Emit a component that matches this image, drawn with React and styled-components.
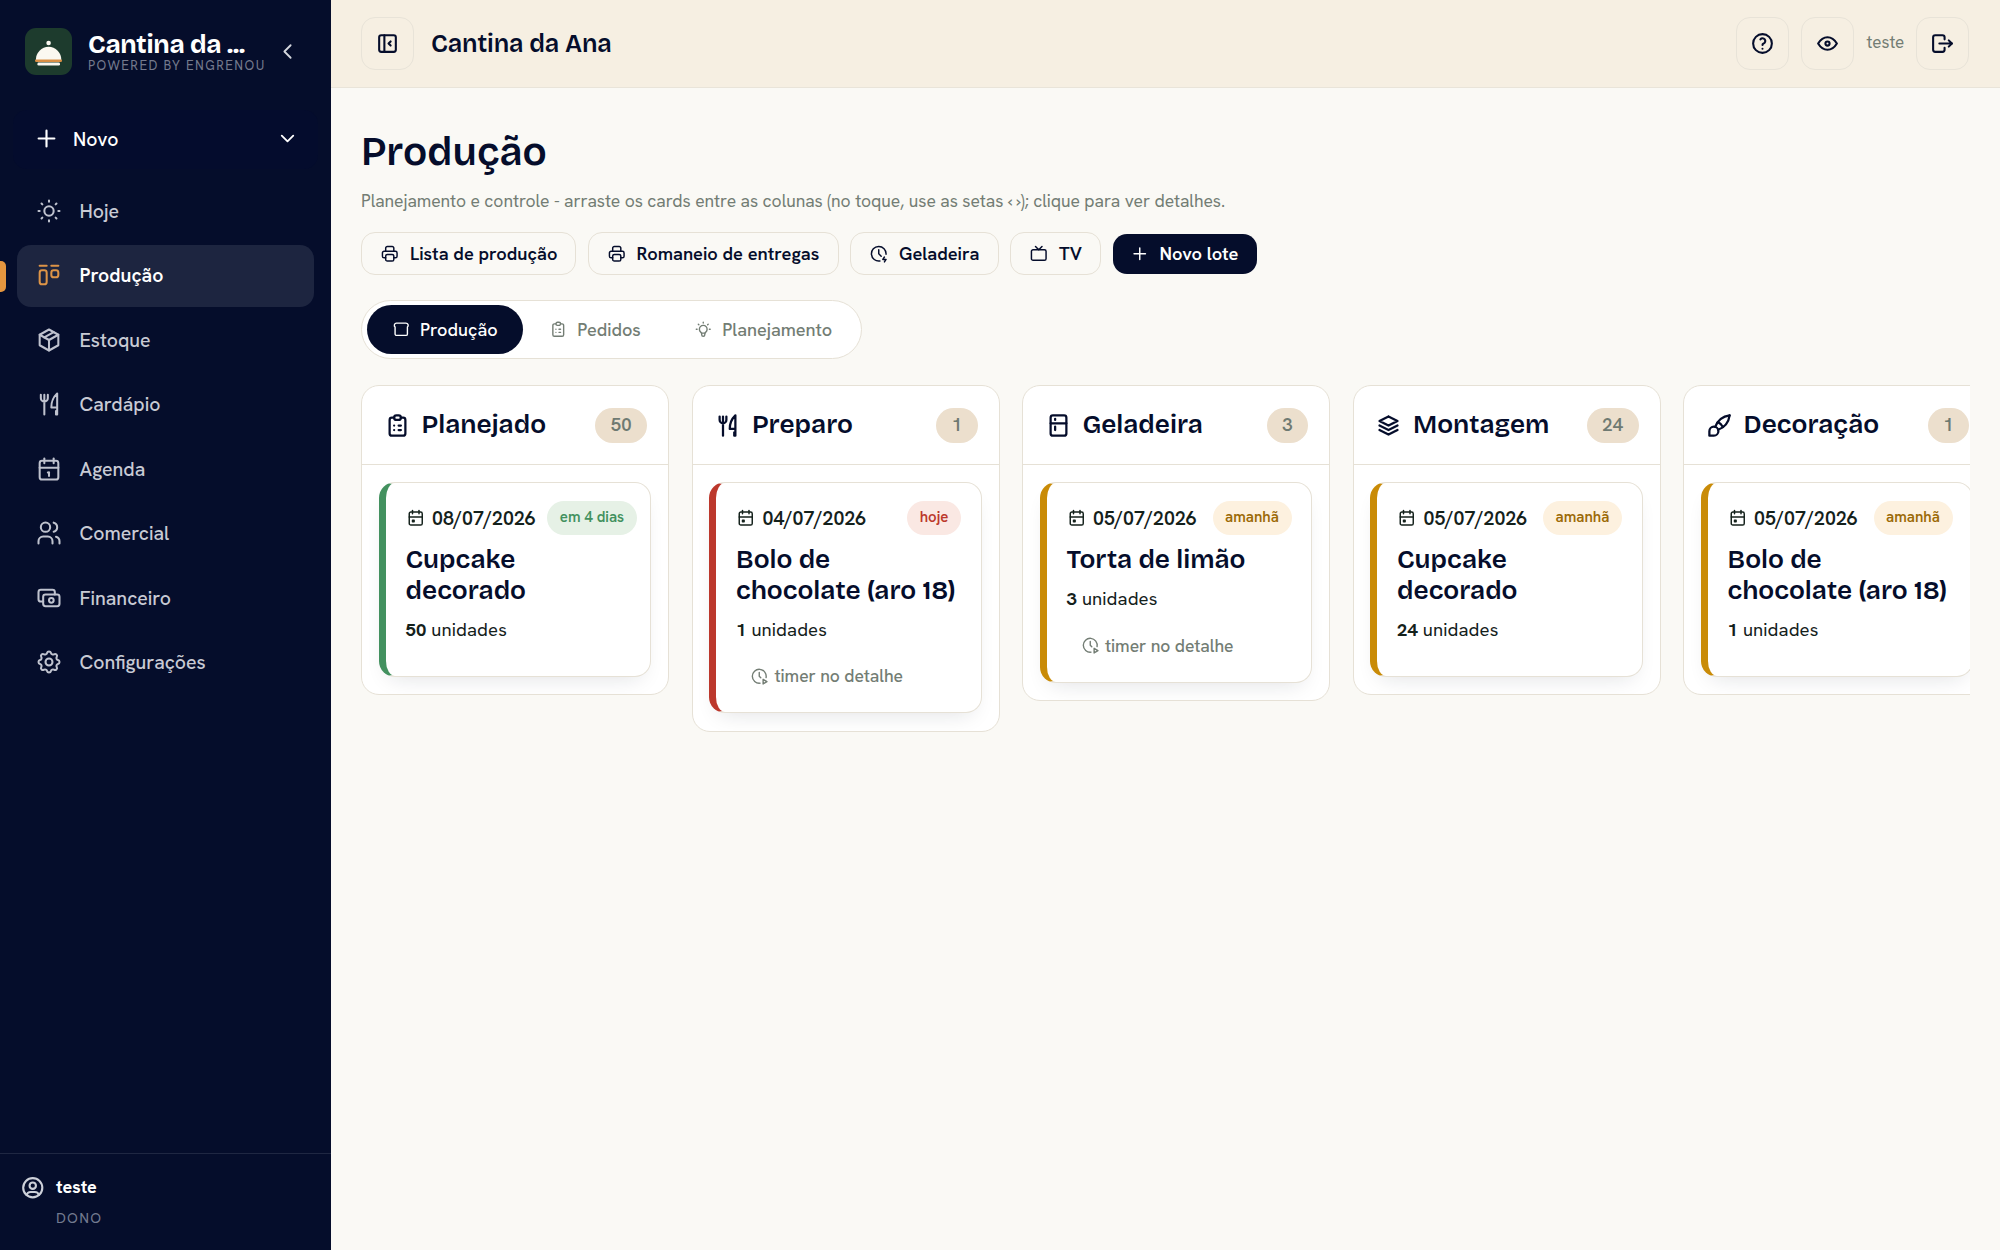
import React from 'react';
import styled, { createGlobalStyle, css } from 'styled-components';
import {
  TbSun, TbLayoutKanban, TbPackage, TbToolsKitchen2, TbCalendar, TbUsers, TbCash, TbSettings,
  TbUserCircle, TbLayoutSidebarLeftCollapse, TbHelp, TbEye, TbLogout, TbPrinter, TbClockBolt,
  TbClockPlay, TbDeviceTv, TbPlus, TbChevronLeft, TbChevronDown, TbBread, TbClipboardList,
  TbBulb, TbFridge, TbStack2, TbBrush, TbCalendarEvent,
} from 'react-icons/tb';

const navy = '#050d2b';
const line = '#e6e1d6';
const muted = '#737d74';
const body = "'Hanken Grotesk', Lato, 'Open Sans', sans-serif";
const display = "'Bricolage Grotesque', Inter, 'Liberation Sans', sans-serif";

const Global = createGlobalStyle`
  * { box-sizing: border-box; }
  body { margin: 0; background: #faf9f5; font-family: ${body}; color: #14211b; overflow: hidden; }
  h1, h2, h3, p { margin: 0; }
  button { font-family: inherit; margin: 0; }
  svg { flex: none; display: block; }
`;

const icon = (size, stroke = 2) => css`
  > svg { width: ${size}px; height: ${size}px; stroke-width: ${stroke}; }
`;

const Shell = styled.div`display: flex; width: 2000px; height: 1250px;`;

const Sidebar = styled.aside`
  width: 330.5px; flex: none; background: ${navy}; display: flex; flex-direction: column; overflow: hidden;
`;
const Brand = styled.div`display: flex; align-items: center; height: 103px; padding: 0 31px 0 25px;`;
const Logo = styled.svg`width: 47px; height: 47px;`;
const BrandText = styled.div`margin-left: 16px; width: 180px;`;
const BrandName = styled.div`
  font: 700 26px/29px ${display}; letter-spacing: -0.3px; color: #fff; white-space: nowrap;
`;
const Powered = styled.div`
  font-size: 13px; line-height: 14px; letter-spacing: 1.4px; color: #747a8d; white-space: nowrap;
`;
const Collapse = styled.button`
  margin-left: auto; padding: 0; border: 0; background: none; color: #d5d7de; ${icon(25, 1.75)}
`;
const NewButton = styled.button`
  margin: 7px 13px 0; height: 59px; padding: 0 19px 1.5px 20px; border: 0; border-radius: 14px; background: #040c2d;
  color: #fff; display: flex; align-items: center; font-size: 19.5px; font-weight: 500;
  ${icon(27, 1.9)}
  > span { margin-left: 13px; flex: 1; text-align: left; }
  > svg:last-child { width: 23px; height: 23px; }
`;
const Nav = styled.nav`margin-top: 11px; padding: 0 16.5px 0 17px; display: flex; flex-direction: column; gap: 2.5px;`;
const NavItem = styled.a`
  position: relative; height: 62px; border-radius: 14px; padding: 0 0 0.5px 17.5px; gap: 17px; display: flex; align-items: center;
  font-size: 19.5px;
  font-weight: ${p => (p.$active ? 600 : 500)};
  color: ${p => (p.$active ? '#fff' : '#c8cad4')};
  background: ${p => (p.$active ? '#1d2540' : 'transparent')};
  ${icon(28, 1.75)}
  > svg { color: ${p => (p.$active ? '#dd9447' : '#bfc2ce')}; }
  ${p => p.$active && css`
    &::before { content: ''; position: absolute; left: -17px; top: 16px; width: 6px; height: 31px; background: #e5963f; border-radius: 0 5px 5px 0; }
  `}
`;
const Account = styled.div`
  margin-top: auto; height: 97px; border-top: 1px solid #1f2742; padding: 21px 0 0 19.5px; display: flex; gap: 11px;
  color: #cdd0d9; ${icon(25.5, 2)}
`;
const AccountName = styled.div`color: #fff; font-weight: 700; font-size: 18px; line-height: 23px;`;
const Role = styled.div`color: #737a8f; font-size: 14.5px; line-height: 18px; letter-spacing: 1.2px; margin-top: 11px;`;

const Main = styled.div`flex: 1; min-width: 0; display: flex; flex-direction: column;`;
const Header = styled.header`
  height: 88px; flex: none; background: #f6efe2; border-bottom: 1.5px solid #e9e4d9; padding: 0 31px 1px 30.5px;
  display: flex; align-items: center;
`;
const IconButton = styled.button`
  width: 53px; height: 53px; border: 1.25px solid #e8e3d8; border-radius: 14px; background: transparent; color: ${navy};
  display: grid; place-items: center; padding: 0; ${icon(25, 2)}
`;
const HeaderTitle = styled.div`
  margin-left: 17px; padding-top: 1px; font: 600 25px/30px ${display}; letter-spacing: -0.1px; color: ${navy};
`;
const HeaderTools = styled.div`margin-left: auto; display: flex; align-items: center; gap: 12.5px;`;
const HeaderUser = styled.span`font-size: 17px; color: ${muted}; width: 37px; padding-bottom: 3px;`;

const Content = styled.main`padding: 42px 30.5px 0;`;
const PageTitle = styled.h1`font: 600 40px/44px ${display}; color: ${navy};`;
const Lead = styled.p`
  margin-top: 15px; font-size: 17.5px; line-height: 24px; letter-spacing: -0.06px; color: ${muted}; white-space: nowrap;
`;
const Actions = styled.div`margin-top: 19px; display: flex; align-items: center; gap: 11.5px; height: 43px;`;
const Action = styled.button`
  width: ${p => p.$w}px; height: ${p => (p.$primary ? 40 : 43)}px; border-radius: 14px; padding: 0 0 0 ${p => (p.$primary ? 17 : 18)}px;
  border: ${p => (p.$primary ? '0' : `1.25px solid ${line}`)};
  background: ${p => (p.$primary ? navy : 'transparent')}; color: ${p => (p.$primary ? '#fff' : navy)};
  display: flex; align-items: center; gap: 10.5px; font-size: 18.25px; font-weight: 600; white-space: nowrap;
  ${icon(19.5, 1.8)}
`;
const Tabs = styled.div`
  margin-top: 25px; width: 501px; height: 59px; border: 1.25px solid ${line}; border-radius: 30px; background: #fff;
  padding: 4px 4px 4px 5px; display: flex; gap: 1.5px;
`;
const Tab = styled.button`
  width: ${p => p.$w}px; height: 49px; border: 0; border-radius: 25px; padding: 0 0 0.5px 25px;
  display: flex; align-items: center; gap: 9.5px; font-size: 18.1px; font-weight: 500;
  background: ${p => (p.$active ? navy : 'transparent')}; color: ${p => (p.$active ? '#fff' : muted)};
  ${icon(18.5, 1.8)}
`;

const Board = styled.div`margin-top: 26px; display: flex; gap: 22.5px; align-items: flex-start; overflow: hidden; height: 400px;`;
const Column = styled.section`
  width: 308px; flex: none; border: 1.25px solid ${line}; border-radius: 18px; background: #fff; overflow: hidden;
`;
const ColumnHead = styled.div`
  height: 79px; border-bottom: 1.25px solid ${line}; padding: 0 21px 0 21.5px; display: flex; align-items: center; color: ${navy};
  ${icon(27, 2)}
`;
const ColumnTitle = styled.h2`
  margin-left: 11px; flex: 1; font: 600 26.2px/32px ${display};
`;
const Count = styled.span`
  height: 35px; border-radius: 18px; background: #ecdfcd; color: #6f7a72; padding: 0 15.5px; font-size: 18.5px; line-height: 33px;
  font-weight: 600;
`;
const ColumnBody = styled.div`padding: 17px 17px 17.5px 16.5px;`;
const Card = styled.article`
  border: 1.25px solid ${line}; border-left: 7px solid ${p => p.$edge}; border-radius: 16px; background: #fff;
  box-shadow: 0 10px 22px -10px rgba(20, 25, 40, 0.14); padding: 18px 19.5px 18px 20px;
`;
const CardTop = styled.div`
  display: flex; align-items: center; height: 34px; ${icon(19.5, 1.8)}
`;
const DateText = styled.span`
  margin: 0 12px 0 7px; flex: 1 0 auto; width: 103px; font-size: 19.5px; font-weight: 600; white-space: nowrap;
`;
const Pill = styled.span`
  flex: none; width: ${p => p.$w}px; text-align: center; height: 33.5px; line-height: 32px; border-radius: 17px; font-size: 15px; font-weight: 600;
  color: ${p => p.$fg}; background: ${p => p.$bg};
`;
const CardTitle = styled.h3`
  margin-top: 10px; font: 600 26.2px/30.6px ${display}; color: ${navy}; white-space: pre;
`;
const Qty = styled.div`
  margin-top: 8.5px; font-size: 18.5px; line-height: 30px; letter-spacing: 0.1px; height: 43px;
  b { font-weight: 700; }
`;
const Timer = styled.div`
  height: 36.5px; display: flex; align-items: center; padding-left: 14px; gap: 6px; color: ${muted}; font-size: 17.5px; font-weight: 500;
  letter-spacing: -0.06px; ${icon(18.5, 1.8)}
`;

const nav = [
  { label: 'Hoje', Icon: TbSun },
  { label: 'Produção', Icon: TbLayoutKanban, active: true },
  { label: 'Estoque', Icon: TbPackage },
  { label: 'Cardápio', Icon: TbToolsKitchen2 },
  { label: 'Agenda', Icon: TbCalendar },
  { label: 'Comercial', Icon: TbUsers },
  { label: 'Financeiro', Icon: TbCash },
  { label: 'Configurações', Icon: TbSettings },
];

const tones = {
  green: { edge: '#43915f', fg: '#43915f', bg: '#e6f1e6' },
  red: { edge: '#bc382c', fg: '#bc382c', bg: '#fae8e3' },
  amber: { edge: '#c98b07', fg: '#9c6a08', bg: '#fdf1df' },
};

const columns = [
  { title: 'Planejado', Icon: TbClipboardList, count: 50, date: '08/07/2026', due: 'em 4 dias', dueW: 90, tone: 'green', item: 'Cupcake\ndecorado', qty: 50 },
  { title: 'Preparo', Icon: TbToolsKitchen2, count: 1, date: '04/07/2026', due: 'hoje', dueW: 54, tone: 'red', item: 'Bolo de\nchocolate (aro 18)', qty: 1, timer: true },
  { title: 'Geladeira', Icon: TbFridge, count: 3, date: '05/07/2026', due: 'amanhã', dueW: 79, tone: 'amber', item: 'Torta de limão', qty: 3, timer: true },
  { title: 'Montagem', Icon: TbStack2, count: 24, date: '05/07/2026', due: 'amanhã', dueW: 79, tone: 'amber', item: 'Cupcake\ndecorado', qty: 24 },
  { title: 'Decoração', Icon: TbBrush, count: 1, date: '05/07/2026', due: 'amanhã', dueW: 79, tone: 'amber', item: 'Bolo de\nchocolate (aro 18)', qty: 1 },
];

function BoardColumn({ title, Icon, count, date, due, dueW, tone, item, qty, timer }) {
  const t = tones[tone];
  return (
    <Column>
      <ColumnHead><Icon /><ColumnTitle>{title}</ColumnTitle><Count>{count}</Count></ColumnHead>
      <ColumnBody>
        <Card $edge={t.edge}>
          <CardTop><TbCalendarEvent /><DateText>{date}</DateText><Pill $w={dueW} $fg={t.fg} $bg={t.bg}>{due}</Pill></CardTop>
          <CardTitle>{item}</CardTitle>
          <Qty><b>{qty}</b> unidades</Qty>
          {timer && <Timer><TbClockPlay />timer no detalhe</Timer>}
        </Card>
      </ColumnBody>
    </Column>
  );
}

export default function App() {
  return (
    <Shell>
      <Global />
      <Sidebar>
        <Brand>
          <Logo viewBox="0 0 47 47">
            <rect width="47" height="47" rx="11" fill="#1d3b2d" />
            <circle cx="23.6" cy="15" r="2.3" fill="#fbf8f0" />
            <path d="M10.8 32a12.8 13.2 0 0 1 25.6 0z" fill="#fbf8f0" />
            <rect x="10" y="31.4" width="27" height="2.6" rx="1.2" fill="#d98f45" />
            <rect x="12.4" y="34.6" width="22.6" height="3" rx="1.3" fill="#fbf8f0" />
          </Logo>
          <BrandText>
            <BrandName>Cantina da ...</BrandName>
            <Powered>POWERED BY ENGRENOU</Powered>
          </BrandText>
          <Collapse aria-label="Recolher"><TbChevronLeft /></Collapse>
        </Brand>
        <NewButton><TbPlus /><span>Novo</span><TbChevronDown /></NewButton>
        <Nav>
          {nav.map(({ label, Icon, active }) => (
            <NavItem key={label} $active={active}><Icon />{label}</NavItem>
          ))}
        </Nav>
        <Account>
          <TbUserCircle />
          <div>
            <AccountName>teste</AccountName>
            <Role>DONO</Role>
          </div>
        </Account>
      </Sidebar>
      <Main>
        <Header>
          <IconButton><TbLayoutSidebarLeftCollapse /></IconButton>
          <HeaderTitle>Cantina da Ana</HeaderTitle>
          <HeaderTools>
            <IconButton><TbHelp /></IconButton>
            <IconButton><TbEye /></IconButton>
            <HeaderUser>teste</HeaderUser>
            <IconButton><TbLogout /></IconButton>
          </HeaderTools>
        </Header>
        <Content>
          <PageTitle>Produção</PageTitle>
          <Lead>Planejamento e controle - arraste os cards entre as colunas (no toque, use as setas ‹ ›); clique para ver detalhes.</Lead>
          <Actions>
            <Action $w={215}><TbPrinter />Lista de produção</Action>
            <Action $w={251}><TbPrinter />Romaneio de entregas</Action>
            <Action $w={148.5}><TbClockBolt />Geladeira</Action>
            <Action $w={91}><TbDeviceTv />TV</Action>
            <Action $w={144.5} $primary><TbPlus />Novo lote</Action>
          </Actions>
          <Tabs>
            <Tab $w={156} $active><TbBread />Produção</Tab>
            <Tab $w={143.5}><TbClipboardList />Pedidos</Tab>
            <Tab $w={188}><TbBulb />Planejamento</Tab>
          </Tabs>
          <Board>
            {columns.map(c => <BoardColumn key={c.title} {...c} />)}
          </Board>
        </Content>
      </Main>
    </Shell>
  );
}
